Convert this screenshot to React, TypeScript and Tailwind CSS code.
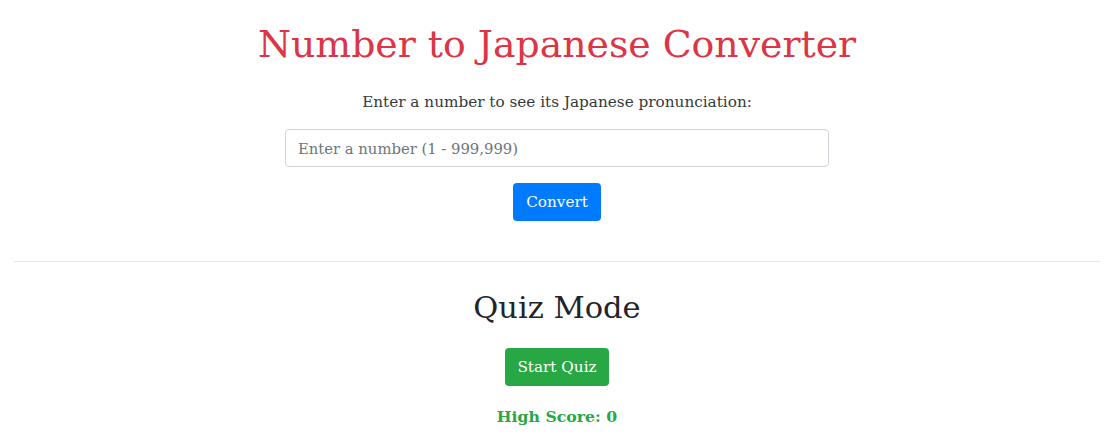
import React from 'react';

const App: React.FC = () => {
  return (
    <div
      className="min-h-screen bg-white text-center pt-[17px]"
      style={{ fontFamily: '"DejaVu Serif", "Liberation Serif", serif' }}
    >
      <h1 className="text-[37.8px] leading-[55px] text-[#dc3545]">Number to Japanese Converter</h1>
      <p className="mt-[18px] text-[15.25px] leading-[24px] text-[#343a40]">
        Enter a number to see its Japanese pronunciation:
      </p>
      <input
        type="text"
        placeholder="Enter a number (1 - 999,999)"
        className="mt-[15px] block mx-auto w-[544px] h-[38px] px-3 border border-[#ced4da] rounded-[4px] text-[14.8px] text-[#495057] placeholder:text-[#6c757d] outline-none"
      />
      <button className="mt-[16px] h-[38px] px-[13px] rounded-[4px] bg-[#007bff] text-white text-[15.25px]">
        Convert
      </button>

      <hr className="mt-[40px] mx-[14px] border-0 border-t border-[#e5e5e5]" />

      <h2 className="mt-[24px] text-[30.5px] leading-[43px] text-[#212529]">Quiz Mode</h2>
      <button className="mt-[19px] h-[38px] px-[12px] rounded-[4px] bg-[#28a745] text-white text-[15.25px]">
        Start Quiz
      </button>
      <p className="mt-[19px] text-[15.7px] leading-[24px] font-bold text-[#28a745]">High Score: 0</p>
    </div>
  );
};

export default App;
